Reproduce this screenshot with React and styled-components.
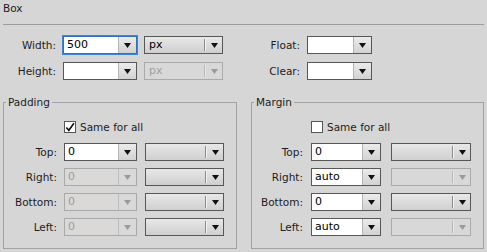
import React from 'react';
import styled, { createGlobalStyle } from 'styled-components';

const GlobalStyle = createGlobalStyle`
  * { box-sizing: border-box; }
  html, body {
    margin: 0;
    padding: 0;
    background: #d6d6d6;
  }
  body {
    font-family: "DejaVu Sans", "Liberation Sans", sans-serif;
    font-size: 10.5px;
    color: #1c1c1c;
  }
`;

const Panel = styled.div`
  width: 487px;
  height: 252px;
  background: #d6d6d6;
  overflow: hidden;
`;

const Header = styled.div`
  height: 25px;
  margin: 0 3px;
  padding-top: 2px;
  line-height: 13px;
  border-bottom: 1px solid #9c9c9c;
`;

const TopGrid = styled.div`
  display: grid;
  grid-template-columns: 56px 74px 79px 70px 65px;
  grid-auto-rows: 18px;
  column-gap: 7px;
  row-gap: 8px;
  margin-top: 11px;
  align-items: center;
`;

const Label = styled.span`
  text-align: right;
  white-space: nowrap;
  line-height: 18px;
`;

const ComboBox = styled.div`
  display: flex;
  height: 18px;
  border: 1px solid ${p => (p.$disabled ? '#a9a9a9' : '#575757')};
  box-shadow: ${p => (p.$focused ? '0 0 0 1px #3c83da' : 'none')};
  ${p => p.$focused && 'border-color: #2f6fc4;'}
  background: ${p => (p.$disabled ? '#dbd9d7' : '#ffffff')};
`;

const ComboField = styled.span`
  flex: 1;
  padding-left: 3px;
  line-height: 16px;
  font-size: 11px;
  color: ${p => (p.$disabled ? '#9c9c9c' : '#000')};
`;

const ComboButton = styled.span`
  width: 18px;
  display: flex;
  align-items: center;
  justify-content: center;
  border-left: 1px solid ${p => (p.$disabled ? '#bdbdbd' : '#b4b4b4')};
  background: ${p =>
    p.$disabled ? '#d9d9d9' : 'linear-gradient(#ebebeb, #d2d2d2)'};
`;

const SelectBox = styled.div`
  display: flex;
  align-items: center;
  height: 18px;
  border: 1px solid ${p => (p.$disabled ? '#aaaaaa' : '#575757')};
  background: ${p =>
    p.$disabled ? '#d8d8d8' : 'linear-gradient(#e8e8e8, #dadada 55%, #cfcfcf)'};
`;

const SelectText = styled.span`
  flex: 1;
  padding-left: 4px;
  font-size: 11px;
  line-height: 16px;
  color: ${p => (p.$disabled ? '#a0a0a0' : '#000')};
`;

const SelectDivider = styled.span`
  width: 2px;
  height: 12px;
  border-left: 1px solid ${p => (p.$disabled ? '#b8b8b8' : '#8a8a8a')};
  border-right: 1px solid ${p => (p.$disabled ? '#e6e6e6' : '#f4f4f4')};
`;

const ArrowSlot = styled.span`
  width: 16px;
  display: flex;
  justify-content: center;
`;

const Columns = styled.div`
  display: flex;
  gap: 14px;
  margin: 16px 3px 0;
`;

const Group = styled.fieldset`
  width: ${p => p.$width}px;
  height: 153px;
  margin: 0;
  padding: 9px 0 0;
  border: 1px solid #a2a2a2;
  min-width: 0;
`;

const Legend = styled.legend`
  margin-left: 2px;
  padding: 0 2px;
  line-height: 13px;
`;

const GroupGrid = styled.div`
  display: grid;
  grid-template-columns: ${p => p.$cols};
  grid-auto-rows: 18px;
  row-gap: 7px;
  align-items: center;
`;

const CheckRow = styled.label`
  grid-column: 3 / -1;
  display: flex;
  align-items: center;
  gap: 4px;
`;

const CheckBox = styled.span`
  width: 12px;
  height: 12px;
  border: 1px solid #555;
  background: #fff;
  display: flex;
  align-items: center;
  justify-content: center;
`;

const Spacer = styled.span``;

const Arrow = ({ disabled }) => (
  <svg width="7" height="5" viewBox="0 0 7 5">
    <polygon points="0,0 7,0 3.5,5" fill={disabled ? '#9a9a9a' : '#111'} />
  </svg>
);

const Combo = ({ value = '', disabled, focused }) => (
  <ComboBox $disabled={disabled} $focused={focused}>
    <ComboField $disabled={disabled}>{value}</ComboField>
    <ComboButton $disabled={disabled}>
      <Arrow disabled={disabled} />
    </ComboButton>
  </ComboBox>
);

const Select = ({ value = '', disabled }) => (
  <SelectBox $disabled={disabled}>
    <SelectText $disabled={disabled}>{value}</SelectText>
    <SelectDivider $disabled={disabled} />
    <ArrowSlot>
      <Arrow disabled={disabled} />
    </ArrowSlot>
  </SelectBox>
);

const Check = ({ checked }) => (
  <CheckBox>
    {checked && (
      <svg width="11" height="11" viewBox="0 0 11 11">
        <path d="M1.5 5.5 L4.2 8.6 L9.8 0.8" fill="none" stroke="#111" strokeWidth="1.8" />
      </svg>
    )}
  </CheckBox>
);

const padding = {
  title: 'Padding',
  width: 235,
  cols: '53px 7px 73px 8px 79px',
  checked: true,
  rows: [
    { label: 'Top:', value: '0' },
    { label: 'Right:', value: '0', disabled: true },
    { label: 'Bottom:', value: '0', disabled: true },
    { label: 'Left:', value: '0', disabled: true }
  ]
};

const margin = {
  title: 'Margin',
  width: 234,
  cols: '51px 8px 70px 10px 80px',
  checked: false,
  rows: [
    { label: 'Top:', value: '0' },
    { label: 'Right:', value: 'auto', unitDisabled: true },
    { label: 'Bottom:', value: '0' },
    { label: 'Left:', value: 'auto', unitDisabled: true }
  ]
};

const SideGroup = ({ group }) => (
  <Group $width={group.width}>
    <Legend>{group.title}</Legend>
    <GroupGrid $cols={group.cols}>
      <Spacer />
      <CheckRow>
        <Check checked={group.checked} />
        Same for all
      </CheckRow>
      {group.rows.map(r => (
        <React.Fragment key={r.label}>
          <Label>{r.label}</Label>
          <Spacer />
          <Combo value={r.value} disabled={r.disabled} />
          <Spacer />
          <Select disabled={r.unitDisabled} />
        </React.Fragment>
      ))}
    </GroupGrid>
  </Group>
);

export default function App() {
  return (
    <Panel>
      <GlobalStyle />
      <Header>Box</Header>
      <TopGrid>
        <Label>Width:</Label>
        <Combo value="500" focused />
        <Select value="px" />
        <Label>Float:</Label>
        <Combo />
        <Label>Height:</Label>
        <Combo />
        <Select value="px" disabled />
        <Label>Clear:</Label>
        <Combo />
      </TopGrid>
      <Columns>
        <SideGroup group={padding} />
        <SideGroup group={margin} />
      </Columns>
    </Panel>
  );
}
